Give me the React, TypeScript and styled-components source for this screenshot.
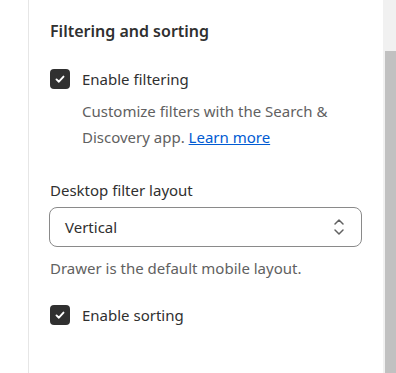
import React from "react";
import styled, { createGlobalStyle } from "styled-components";

const Global = createGlobalStyle`
  html, body { margin: 0; padding: 0; background: #ffffff; }
  body { font-family: "Noto Sans", "Open Sans", sans-serif; color: #303030; }
`;

const Page = styled.div`
  display: flex;
  width: 396px;
  height: 373px;
  overflow: hidden;
  background: #fff;
`;

const Gutter = styled.div`
  width: 28px;
  flex: none;
`;

const Panel = styled.div`
  flex: 1;
  border-left: 1px solid #e6e6e6;
  padding: 19px 21px 0 20px;
  display: flex;
  flex-direction: column;
`;

const Scrollbar = styled.div`
  width: 13px;
  flex: none;
  background: #f1f1f1;
  display: flex;
  flex-direction: column;
  padding-top: 51px;
  padding-left: 2px;
  box-sizing: border-box;
`;

const Thumb = styled.div`
  flex: 1;
  background: #c1c1c1;
`;

const Title = styled.h2`
  margin: 0 0 0 1px;
  font-size: 16px;
  font-weight: 600;
  line-height: 24px;
  color: #303030;
`;

const CheckRow = styled.label<{ $top: number }>`
  display: flex;
  align-items: center;
  gap: 12px;
  margin-top: ${(p) => p.$top}px;
  margin-left: 1px;
  font-size: 15px;
  line-height: 22px;
  color: #303030;
`;

const Box = styled.span`
  width: 20px;
  height: 20px;
  border-radius: 4px;
  background: #303030;
  display: flex;
  align-items: center;
  justify-content: center;
  flex: none;
`;

const Help = styled.p`
  margin: 8px 0 0 33px;
  font-size: 15px;
  line-height: 26px;
  color: #616161;
`;

const Link = styled.a`
  color: #005bd3;
  text-decoration: underline;
`;

const Label = styled.div`
  margin-top: 29px;
  margin-left: 1px;
  font-size: 15px;
  line-height: 22px;
  color: #303030;
`;

const Select = styled.div`
  margin-top: 6px;
  height: 40px;
  box-sizing: border-box;
  border: 1px solid #8a8a8a;
  border-radius: 8px;
  display: flex;
  align-items: center;
  justify-content: space-between;
  padding: 0 16px 0 15px;
  font-size: 15px;
  color: #303030;
`;

const Note = styled.div`
  margin-top: 10px;
  margin-left: 1px;
  font-size: 15px;
  line-height: 22px;
  color: #616161;
`;

const Check = () => (
  <Box>
    <svg width="12" height="12" viewBox="0 0 12 12">
      <path d="M2.5 6.4 L4.9 8.7 L9.5 3.6" fill="none" stroke="#fff" strokeWidth="1.9" strokeLinecap="round" strokeLinejoin="round" />
    </svg>
  </Box>
);

export default function App() {
  return (
    <>
      <Global />
      <Page>
        <Gutter />
        <Panel>
          <Title>Filtering and sorting</Title>
          <CheckRow $top={25}>
            <Check />
            Enable filtering
          </CheckRow>
          <Help>
            Customize filters with the Search &amp;
            <br />
            Discovery app. <Link href="#">Learn more</Link>
          </Help>
          <Label>Desktop filter layout</Label>
          <Select>
            <span>Vertical</span>
            <svg width="12" height="20" viewBox="0 0 12 20">
              <path d="M2 7 L6 3 L10 7" fill="none" stroke="#616161" strokeWidth="1.5" strokeLinecap="round" strokeLinejoin="round" />
              <path d="M2 13 L6 17 L10 13" fill="none" stroke="#616161" strokeWidth="1.5" strokeLinecap="round" strokeLinejoin="round" />
            </svg>
          </Select>
          <Note>Drawer is the default mobile layout.</Note>
          <CheckRow $top={25}>
            <Check />
            Enable sorting
          </CheckRow>
        </Panel>
        <Scrollbar>
          <Thumb />
        </Scrollbar>
      </Page>
    </>
  );
}
